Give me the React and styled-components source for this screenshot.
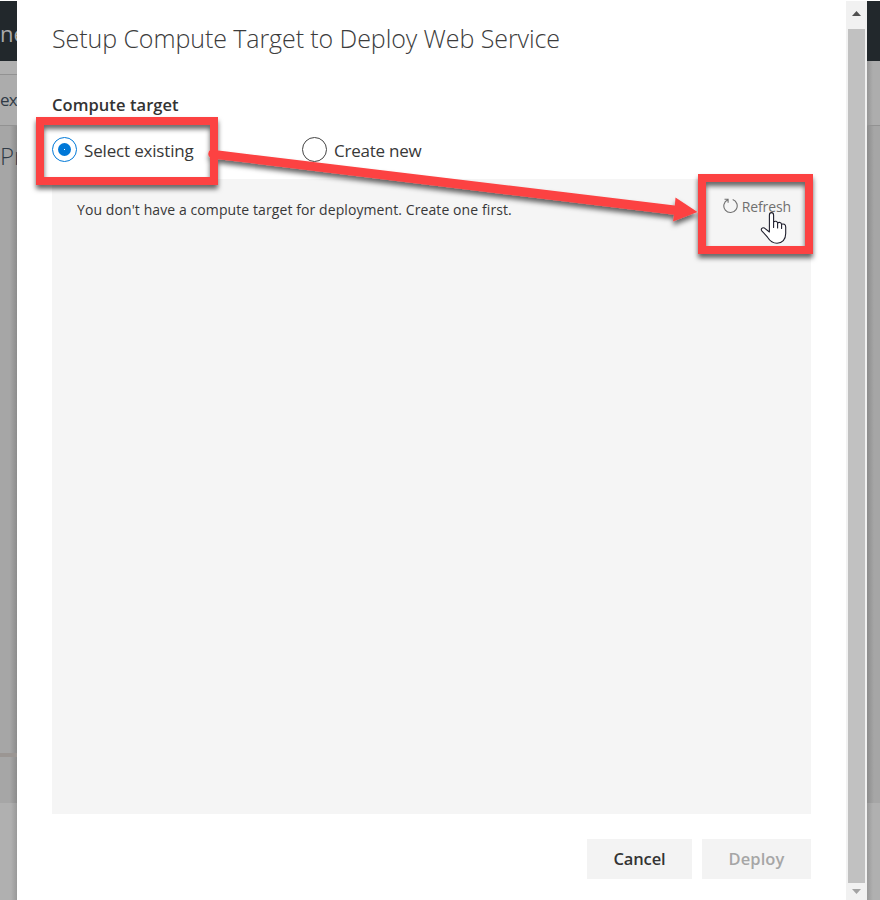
import React from "react";
import styled, { createGlobalStyle } from "styled-components";

const GlobalStyle = createGlobalStyle`
  * { box-sizing: border-box; }
  body { margin: 0; background: #fff; font-family: "Open Sans", "Noto Sans", sans-serif; }
`;

const Screen = styled.div`
  position: relative;
  display: grid;
  grid-template-columns: 17px 829px 21px 13px;
  width: 880px;
  height: 900px;
  padding-top: 1px;
  overflow: hidden;
  background: #fff;
`;

const Backdrop = styled.div`
  display: flex;
  flex-direction: column;
  overflow: hidden;
  color: #343638;
  white-space: nowrap;
  background: linear-gradient(${(p) => (p.$side === "left" ? "to left" : "to right")}, #8c8c8c, #a6a6a6 7px);
`;

const BackdropBand = styled.div`
  flex: none;
  height: ${(p) => p.$height}px;
  padding-top: ${(p) => p.$top || 0}px;
  background: ${(p) => p.$fill || "transparent"};
  border-bottom: ${(p) => (p.$line ? "1px solid #929292" : "0")};
  color: ${(p) => p.$color || "#303b47"};
  font-size: ${(p) => p.$size || 17}px;
  font-weight: ${(p) => p.$weight || 400};
  line-height: 24px;
  letter-spacing: ${(p) => p.$spacing || 0}px;
`;

const Dialog = styled.main`
  display: flex;
  flex-direction: column;
  padding: 19px 35px 0;
  background: #fff;
`;

const Title = styled.h1`
  margin: 0;
  height: 75px;
  color: #3c3c3c;
  font-size: 25px;
  font-weight: 300;
  line-height: 36px;
  letter-spacing: -0.08px;
  white-space: nowrap;
`;

const GroupLabel = styled.h2`
  margin: 0;
  height: 42px;
  color: #333;
  font-size: 16.5px;
  font-weight: 600;
  line-height: 20px;
  letter-spacing: 0.07px;
`;

const RadioGroup = styled.div`
  display: grid;
  grid-template-columns: 250px 1fr;
  height: 42px;
`;

const RadioOption = styled.label`
  display: flex;
  align-items: flex-start;
  gap: 7px;
  color: #383838;
  font-size: 17px;
  line-height: 28px;
  letter-spacing: ${(p) => p.$spacing}px;
  white-space: nowrap;
`;

const RadioMark = styled.span`
  display: grid;
  place-items: center;
  width: 25px;
  height: 25px;
  border: 1px solid ${(p) => (p.$checked ? "#0078d7" : "#444")};
  border-radius: 50%;

  &::after {
    content: "";
    width: 13px;
    height: 13px;
    border-radius: 50%;
    background: ${(p) => (p.$checked ? "radial-gradient(circle, #fff 0 0.5px, #0078d7 0.9px)" : "transparent")};
  }
`;

const TargetPanel = styled.section`
  display: flex;
  justify-content: space-between;
  height: 635px;
  padding: 17px 20px 0 25px;
  background: #f5f5f5;
`;

const Message = styled.p`
  margin: 3px 0 0;
  color: #383838;
  font-size: 14px;
  line-height: 22px;
  letter-spacing: 0.09px;
  white-space: nowrap;
`;

const RefreshButton = styled.button`
  display: flex;
  align-items: flex-start;
  gap: 4px;
  height: 24px;
  padding: 0;
  border: 0;
  background: none;
  color: #707070;
  font: 400 14px/21px "Open Sans", sans-serif;
  letter-spacing: -0.1px;

  svg { margin-top: 2px; }
`;

const Footer = styled.footer`
  display: flex;
  justify-content: flex-end;
  gap: 10px;
  margin-top: 25px;
`;

const FooterButton = styled.button`
  width: ${(p) => p.$width}px;
  height: 40px;
  padding: 0;
  border: 0;
  background: #f3f3f3;
  color: ${(p) => (p.disabled ? "#a6a6a6" : "#333")};
  font: 600 16.5px/24px "Open Sans", sans-serif;
  letter-spacing: ${(p) => p.$spacing}px;
`;

const Scrollbar = styled.div`
  display: grid;
  grid-template-rows: 28px 854px 17px;
  justify-items: center;
  background: #f1f1f1;

  svg { display: block; align-self: center; }
  svg:first-child { transform: translateY(-2px); }
`;

const ScrollThumb = styled.div`
  width: 17px;
  background: #c1c1c1;
`;

const Annotations = styled.svg`
  position: absolute;
  inset: 0;
  pointer-events: none;
`;

function RefreshIcon() {
  return (
    <svg width="16" height="17" viewBox="0 0 16 17" fill="none" stroke="#707070" strokeWidth="1.1">
      <path d="M10.7 1.5A6.7 6.7 0 1 1 5.8 1.7M2.5 1.2H6.1V4.8" />
    </svg>
  );
}

export default function App() {
  return (
    <>
      <GlobalStyle />
      <Screen>
        <Backdrop $side="left">
          <BackdropBand $height={60} $top={20} $fill="#22282c" $color="#aaa" $size={22}>ne</BackdropBand>
          <BackdropBand $height={14} $fill="#b0b0b0" $line />
          <BackdropBand $height={51} $top={13} $fill="#acacac" $spacing={-0.8} $line>ex</BackdropBand>
          <BackdropBand $height={627} $top={18} $size={24} $weight={300}>Pr</BackdropBand>
          <BackdropBand $height={4} $fill="#9b9693" />
          <BackdropBand $height={46} />
          <BackdropBand $height={97} $fill="linear-gradient(to left, #999, #b0b0b0 6px)" />
        </Backdrop>
        <Dialog>
          <Title>Setup Compute Target to Deploy Web Service</Title>
          <GroupLabel>Compute target</GroupLabel>
          <RadioGroup>
            <RadioOption $spacing={-0.17}><RadioMark $checked />Select existing</RadioOption>
            <RadioOption $spacing={-0.24}><RadioMark />Create new</RadioOption>
          </RadioGroup>
          <TargetPanel>
            <Message>You don't have a compute target for deployment. Create one first.</Message>
            <RefreshButton><RefreshIcon />Refresh</RefreshButton>
          </TargetPanel>
          <Footer>
            <FooterButton $width={105} $spacing={-0.15}>Cancel</FooterButton>
            <FooterButton $width={109} $spacing={0.1} disabled>Deploy</FooterButton>
          </Footer>
        </Dialog>
        <Scrollbar>
          <svg width="9" height="5" viewBox="0 0 9 5"><path d="M0 5L4.5 0L9 5Z" fill="#505050" /></svg>
          <ScrollThumb />
          <svg width="9" height="5" viewBox="0 0 9 5"><path d="M0 0H9L4.5 5Z" fill="#a3a3a3" /></svg>
        </Scrollbar>
        <Backdrop $side="right">
          <BackdropBand $height={60} $fill="#22282c" />
          <BackdropBand $height={65} $fill="linear-gradient(to right, #969696, #adadad 6px)" $line />
          <BackdropBand $height={677} />
          <BackdropBand $height={97} $fill="linear-gradient(to right, #999, #b0b0b0 6px)" />
        </Backdrop>
        <Annotations width="880" height="900" viewBox="0 0 880 900">
          <defs>
            <filter id="markShadow" x="-10%" y="-20%" width="120%" height="150%">
              <feDropShadow dx="0" dy="4" stdDeviation="2.5" floodColor="#000" floodOpacity="0.6" />
            </filter>
          </defs>
          <g filter="url(#markShadow)">
            <path d="M210.5 149.6Q207.5 152 208.5 155.5Q209.5 158 212 158.4L674 214.8L673 221.5L697.5 212L675.5 197.5L674.8 205.5Z" fill="#fc4343" />
            <rect x="40" y="121" width="174" height="60" fill="none" stroke="#fc4343" strokeWidth="8" />
            <rect x="702" y="178" width="107" height="72" fill="none" stroke="#fc4343" strokeWidth="8" />
          </g>
          <path d="M769.4 215.3C769.4 211.7 773.6 211.7 773.6 215.3V222C775 220.6 777.2 221.1 777.6 223C779.1 221.8 781.2 222.4 781.6 224.3C783.4 223.4 785.7 224.4 785.7 227V233.5C785.7 239.5 782.2 243.2 777 243.2C772.4 243.2 769.8 240.8 767.5 237.2L761.8 230.8C760.4 228.7 762.4 227.2 764.5 228.1L769.4 232ZM773.6 221.5V227.5M777.6 223V228M781.6 224V228.5" fill="#fff" stroke="#1e1e2c" strokeWidth="1.1" strokeLinejoin="round" strokeLinecap="round" />
        </Annotations>
      </Screen>
    </>
  );
}
